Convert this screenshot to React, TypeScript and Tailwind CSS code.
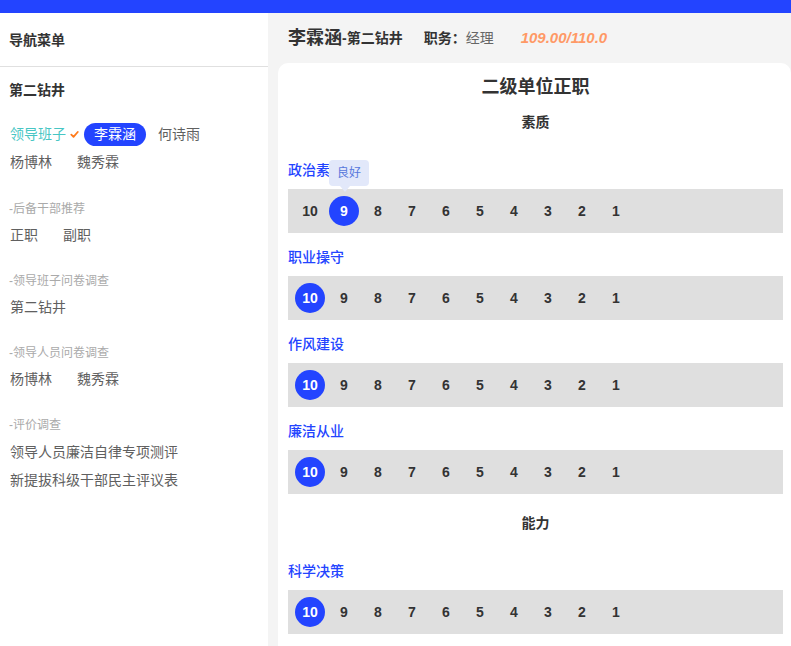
import type { ReactNode } from 'react'

const SCORES = [10, 9, 8, 7, 6, 5, 4, 3, 2, 1]

function Check() {
  return (
    <svg className="w-[9px] h-[9px] ml-[4px]" viewBox="0 0 10 10" fill="none">
      <path d="M1.5 5.2l2.4 2.4L8.6 2.2" stroke="#ff7a1a" strokeWidth={2} strokeLinecap="round" strokeLinejoin="round" />
    </svg>
  )
}

function ScoreBar({ value, tip }: { value: number; tip?: string }) {
  return (
    <div className="mt-[9px] h-[44px] bg-[#dfdfdf] flex items-center pl-[5px]">
      {SCORES.map((n) => (
        <div key={n} className="relative w-[34px] h-[30px] flex items-center justify-center">
          {n === value ? (
            <span className="w-[30px] h-[30px] rounded-full bg-[#2344ff] text-white flex items-center justify-center text-[14px] font-bold">
              {n}
            </span>
          ) : (
            <span className="text-[14px] font-bold text-[#333]">{n}</span>
          )}
          {n === value && tip && (
            <div className="absolute left-[2px] top-[-36px] z-10">
              <div className="w-[40px] h-[26px] rounded-[4px] bg-[#e2e8fa] text-[12px] text-[#5677dc] flex items-center justify-center">
                {tip}
              </div>
              <div className="ml-[11px] w-0 h-0 border-x-[5px] border-x-transparent border-t-[6px] border-t-[#e2e8fa]" />
            </div>
          )}
        </div>
      ))}
    </div>
  )
}

function Item({ label, value, tip, first }: { label: string; value: number; tip?: string; first?: boolean }) {
  return (
    <div className={first ? 'mt-[28px]' : 'mt-[14px]'}>
      <div className="h-[20px] leading-[20px] text-[14px] font-medium text-[#2344ff]">{label}</div>
      <ScoreBar value={value} tip={tip} />
    </div>
  )
}

function Group({ title, children }: { title: string; children: ReactNode }) {
  return (
    <div className="mt-[23px]">
      <div className="h-[20px] leading-[20px] text-[12px] text-[#aaa]">-{title}</div>
      <div className="mt-[3px] text-[14px] text-[#606060]">{children}</div>
    </div>
  )
}

export default function App() {
  return (
    <div className="h-screen overflow-hidden flex flex-col bg-[#f4f4f4] font-['Liberation_Sans','Noto_Sans_CJK_SC',sans-serif] text-[#333]">
      <div className="h-[13px] bg-[#2344ff] shrink-0" />
      <div className="flex flex-1 min-h-0">
        {/* Sidebar */}
        <div className="w-[268px] shrink-0 bg-white">
          <div className="h-[54px] flex items-center pt-[2px] px-[9px] text-[14px] font-bold border-b border-[#e0e0e0]">
            导航菜单
          </div>
          <div className="px-[9px]">
            <div className="mt-[13px] h-[20px] leading-[20px] text-[14px] font-bold">第二钻井</div>
            <div className="mt-[20px] h-[28px] flex items-center text-[14px] text-[#606060] pl-[1px]">
              <span className="text-[#47c6c4]">领导班子</span>
              <Check />
              <span className="ml-[5px] h-[23px] px-[10px] rounded-full bg-[#2344ff] text-white flex items-center">李霖涵</span>
              <span className="ml-[12px]">何诗雨</span>
            </div>
            <div className="h-[28px] flex items-center gap-[25px] text-[14px] text-[#606060] pl-[1px]">
              <span>杨博林</span>
              <span>魏秀霖</span>
            </div>
            <Group title="后备干部推荐">
              <div className="h-[26px] flex items-center gap-[25px] pl-[1px]">
                <span>正职</span>
                <span>副职</span>
              </div>
            </Group>
            <Group title="领导班子问卷调查">
              <div className="h-[26px] flex items-center pl-[1px]">第二钻井</div>
            </Group>
            <Group title="领导人员问卷调查">
              <div className="h-[26px] flex items-center gap-[25px] pl-[1px]">
                <span>杨博林</span>
                <span>魏秀霖</span>
              </div>
            </Group>
            <Group title="评价调查">
              <div className="h-[28px] flex items-center pl-[1px]">领导人员廉洁自律专项测评</div>
              <div className="h-[28px] flex items-center pl-[1px]">新提拔科级干部民主评议表</div>
            </Group>
          </div>
        </div>

        {/* Main */}
        <div className="flex-1 min-w-0 flex flex-col pl-[10px]">
          <div className="h-[50px] shrink-0 flex items-center pl-[10px] font-bold">
            <span className="text-[18px]">李霖涵</span>
            <span className="text-[14px]">-第二钻井</span>
            <span className="ml-[21px] text-[14px]">职务：</span>
            <span className="text-[14px] font-normal text-[#666]">经理</span>
            <span className="ml-[27px] text-[15px] italic text-[#ff9966]">109.00/110.0</span>
          </div>
          <div className="flex-1 bg-white rounded-t-[10px] pl-[10px] pr-[8px] pt-[12px]">
            <div className="h-[24px] leading-[24px] text-center text-[18px] font-bold">二级单位正职</div>
            <div className="mt-[13px] h-[20px] leading-[20px] text-center text-[14px] font-bold">素质</div>
            <Item first label="政治素养" value={9} tip="良好" />
            <Item label="职业操守" value={10} />
            <Item label="作风建设" value={10} />
            <Item label="廉洁从业" value={10} />
            <div className="mt-[19px] h-[20px] leading-[20px] text-center text-[14px] font-bold">能力</div>
            <Item first label="科学决策" value={10} />
          </div>
        </div>
      </div>
    </div>
  )
}
